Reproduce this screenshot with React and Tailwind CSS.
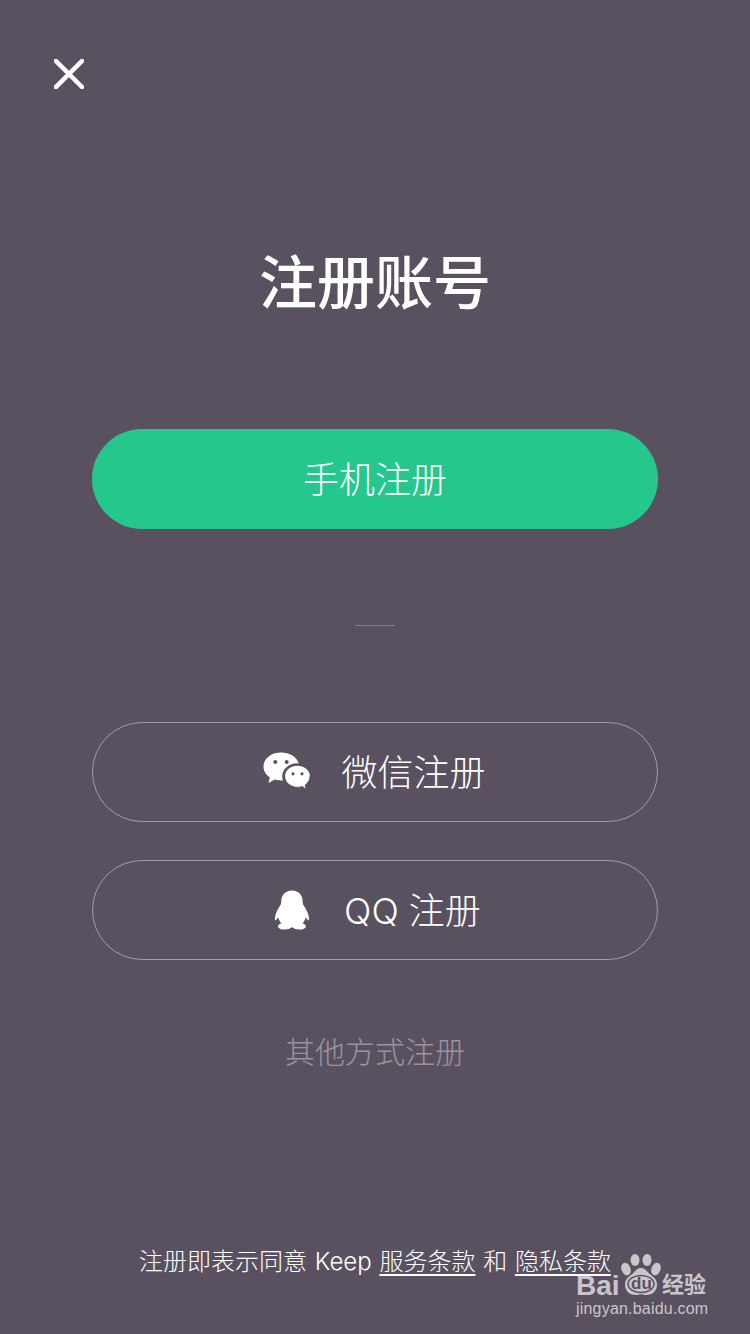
import React from 'react';

const cjk = { fontFamily: 'Inter, "Noto Sans CJK SC", "Noto Sans", sans-serif' };
const latin = { fontFamily: '"Liberation Sans", sans-serif' };

const WechatIcon = () => (
  <svg width="48" height="40" viewBox="0 0 48 40" fill="white">
    <path d="M18 0.500C8.200 0.500 0.500 6.600 0.500 14.800c0 4.400 2.500 8 6.300 10.600L5.400 31l6.400-3.400c2 .5 3.800.9 6.200.9.600 0 1.200 0 1.800-.1-.4-1.200-.6-2.500-.6-3.800 0-7.400 6.600-13.300 15-13.300.5 0 1 0 1.500.1C33.900 4.800 26.600.5 18 .5z" />
    <path d="M47.500 24.300c0-6.200-6.200-11.200-13-11.200-7.300 0-13 5-13 11.200s5.700 11.200 13 11.200c1.500 0 3-.4 4.600-.8l4.600 3.300-1.300-4.800c3-2.400 4.800-5.500 4.800-8.900z" stroke="#5a5160" strokeWidth="1.200" />
    <circle cx="12.300" cy="10" r="2" fill="#5a5160" />
    <circle cx="23.700" cy="10" r="2" fill="#5a5160" />
    <circle cx="30" cy="21.800" r="1.600" fill="#5a5160" />
    <circle cx="39" cy="21.800" r="1.600" fill="#5a5160" />
  </svg>
);

const QQIcon = () => (
  <svg width="36" height="40" viewBox="0 0 36 40" fill="white">
    <path d="M18 0.500c-6.800 0-10.800 5-10.800 11.200 0 1-.1 2-.4 2.800-.9 1.200-1.700 2.700-2.700 4.500C1.700 23.100 0.500 27.200 1 30.200c.6.700 2.200-1.300 3.200-3 .5 2.400 1.600 4.400 3.200 6-1.700.6-3.400 1.800-3.400 3.200 0 2 3.400 3.100 6.500 3.100 3 0 5.600-.8 6.700-2 .5.100 1 .1 1.500 0 1.100 1.200 3.700 2 6.700 2 3.100 0 6.500-1.100 6.500-3.100 0-1.400-1.700-2.600-3.400-3.200 1.600-1.600 2.700-3.600 3.200-6 1 1.700 2.600 3.700 3.200 3 .5-3-.7-7.100-3.100-11.200-1-1.800-1.800-3.300-2.700-4.500-.3-.8-.4-1.800-.4-2.800C28.800 5.500 24.800.5 18 .5z" />
  </svg>
);

const Watermark = () => (
  <div className="absolute left-[576px] top-[1254px] w-[136px] h-[66px] text-[#c9c6cb]">
    <svg className="absolute left-[44px] top-0" width="42" height="42" viewBox="0 0 42 42" fill="currentColor">
      <ellipse cx="6" cy="15" rx="4.500" ry="6.500" transform="rotate(-20 6 15)" />
      <ellipse cx="15" cy="6" rx="4.500" ry="6" />
      <ellipse cx="27" cy="6" rx="4.500" ry="6" />
      <ellipse cx="36" cy="15" rx="4.500" ry="6.500" transform="rotate(20 36 15)" />
      <path d="M21 14c-4.500 0-6 4-10 7-3.500 2.700-6 5-6 10 0 6 5 10 10 10 2.500 0 4-.8 6-.8s3.500.8 6 .8c5 0 10-4 10-10 0-5-2.500-7.300-6-10-4-3-5.500-7-10-7z" />
      <ellipse cx="21" cy="30" rx="13" ry="8.500" fill="none" stroke="#5a5160" strokeWidth="1.500" />
    </svg>
    <span className="absolute left-0 top-[22px] text-[28px] leading-[20px] font-bold" style={latin}>Bai</span>
    <span className="absolute left-[55px] top-[20px] text-[17px] leading-[20px] font-bold text-[#5a5160]" style={latin}>du</span>
    <span className="absolute left-[86px] top-[15px] text-[22px] leading-[30px] font-bold whitespace-nowrap" style={cjk}>经验</span>
    <span className="absolute left-0 top-[45px] text-[16px] leading-[20px] tracking-[0.2px] whitespace-nowrap" style={latin}>jingyan.baidu.com</span>
  </div>
);

export default function App() {
  return (
    <div className="relative w-[750px] h-[1334px] bg-[#5a5160] text-white overflow-hidden flex flex-col items-center" style={cjk}>
      <div className="w-full pl-[54px] pt-[59px]">
        <svg width="30" height="30" viewBox="0 0 30 30" stroke="white" strokeWidth="4.500" strokeLinecap="square" className="block">
          <path d="M2 2L28 28M28 2L2 28" />
        </svg>
      </div>

      <h1 className="mt-[157px] h-[74px] text-[58px] leading-[74px] font-medium">注册账号</h1>

      <button className="mt-[109px] w-[566px] h-[100px] rounded-full bg-[#25c78c] text-[36px] font-light text-white">
        <span className="relative top-[1px]">手机注册</span>
      </button>

      <div className="mt-[96px] w-[40px] h-px bg-[#857d8a]" />

      <button className="mt-[96px] w-[566px] h-[100px] rounded-full border border-[#a29ca7] flex items-center justify-center gap-[30px] text-[36px] font-light pr-[1px]">
        <WechatIcon />
        <span className="relative top-[1px]">微信注册</span>
      </button>

      <button className="mt-[38px] w-[566px] h-[100px] rounded-full border border-[#a29ca7] flex items-center justify-center gap-[34px] text-[36px] font-light pl-[5px]">
        <QQIcon />
        <span className="relative top-[1px]">QQ 注册</span>
      </button>

      <p className="mt-[72px] text-[30px] leading-[40px] font-light text-[#9a93a0]">其他方式注册</p>

      <p className="mt-[176px] text-[24px] leading-[28px] font-light [word-spacing:1px] whitespace-nowrap text-white">
        注册即表示同意 Keep <span className="inline-block underline underline-offset-4">服务条款</span> 和 <span className="inline-block underline underline-offset-4">隐私条款</span>
      </p>

      <Watermark />
    </div>
  );
}
